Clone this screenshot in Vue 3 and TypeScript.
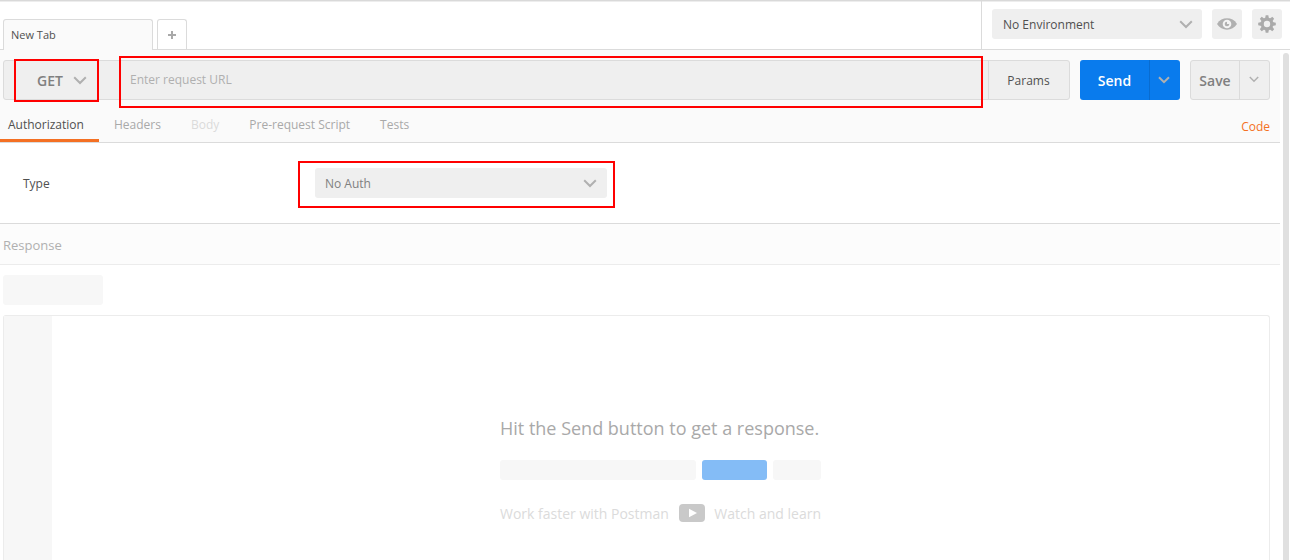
<script setup lang="ts">
interface RequestTab {
  label: string
  state?: 'active' | 'disabled'
}

const requestTabs: RequestTab[] = [
  { label: 'Authorization', state: 'active' },
  { label: 'Headers' },
  { label: 'Body', state: 'disabled' },
  { label: 'Pre-request Script' },
  { label: 'Tests' },
]

const gearTeeth: number[] = [0, 45, 90, 135, 180, 225, 270, 315]
</script>

<template>
  <div class="app">
    <header class="topbar">
      <div class="tabstrip">
        <div class="tab">New Tab</div>
        <button class="add-tab" aria-label="Add tab">
          <svg width="8" height="8" viewBox="0 0 8 8"><path d="M4 0v8M0 4h8" stroke="#a9a9a9" stroke-width="2" /></svg>
        </button>
      </div>
      <div class="environment">
        <div class="select env-select">
          <span>No Environment</span>
          <svg class="chevron" width="14" height="9" viewBox="0 0 14 9"><path d="M1.200 1.200 7 7l5.800-5.800" /></svg>
        </div>
        <button class="icon-button" aria-label="Quick look">
          <svg width="20" height="12" viewBox="0 0 20 12">
            <path d="M0 6C2.500 2 6 .3 10 .3S17.500 2 20 6c-2.500 4-6 5.700-10 5.700S2.500 10 0 6Z" fill="#b0b0b0" />
            <circle cx="10" cy="6" r="4.300" fill="#f3f3f3" />
            <circle cx="10" cy="6" r="2.300" fill="#b0b0b0" />
            <path d="M10 3.200V6h2.600V3.200Z" fill="#f3f3f3" />
          </svg>
        </button>
        <button class="icon-button" aria-label="Settings">
          <svg width="18" height="18" viewBox="-9 -9 18 18">
            <circle r="4.800" fill="none" stroke="#aaa" stroke-width="3.200" />
            <path v-for="angle in gearTeeth" :key="angle" d="M-1.900-5.500-1.300-8.800h2.600l.6 3.300Z" fill="#aaa" :transform="`rotate(${angle})`" />
          </svg>
        </button>
      </div>
    </header>

    <div class="body">
      <main class="content">
        <section class="builder">
          <div class="request-line">
            <div class="request-group">
              <div class="method">
                <span>GET</span>
                <svg class="chevron" width="14" height="9" viewBox="0 0 14 9"><path d="M1.200 1.200 7 7l5.800-5.800" /></svg>
                <i class="mark mark-method"></i>
              </div>
              <div class="url">
                <span>Enter request URL</span>
                <i class="mark mark-url"></i>
              </div>
              <div class="params">Params</div>
            </div>
            <div class="split send">
              <span>Send</span>
              <div class="split-arrow"><svg class="chevron" width="12" height="8" viewBox="0 0 12 8"><path d="M1 1.200 6 6.200l5-5" /></svg></div>
            </div>
            <div class="split save">
              <span>Save</span>
              <div class="split-arrow"><svg class="chevron" width="10" height="7" viewBox="0 0 10 7"><path d="M.8 1 5 5.200 9.200 1" /></svg></div>
            </div>
          </div>
          <nav class="request-tabs">
            <span v-for="tab in requestTabs" :key="tab.label" class="request-tab" :class="tab.state">{{ tab.label }}</span>
            <span class="code">Code</span>
          </nav>
        </section>

        <section class="auth">
          <span class="auth-label">Type</span>
          <div class="select auth-select">
            <span>No Auth</span>
            <svg class="chevron" width="14" height="9" viewBox="0 0 14 9"><path d="M1.200 1.200 7 7l5.800-5.800" /></svg>
            <i class="mark mark-auth"></i>
          </div>
        </section>

        <h2 class="response-title">Response</h2>
        <section class="response">
          <div class="response-chip"></div>
          <div class="viewer">
            <div class="gutter"></div>
            <div class="empty">
              <p class="hint">Hit the Send button to get a response.</p>
              <div class="skeleton"><i class="sk-url"></i><i class="sk-send"></i><i class="sk-save"></i></div>
              <div class="learn">
                <span class="learn-left">Work faster with Postman</span>
                <svg width="26" height="18" viewBox="0 0 26 18"><rect width="26" height="18" rx="4" fill="#c9c9c9" /><path d="M10 4.800v8.400L18 9Z" fill="#fff" /></svg>
                <span class="learn-right">Watch and learn</span>
              </div>
            </div>
          </div>
        </section>
      </main>
      <div class="scrollbar"><div class="thumb"></div></div>
    </div>
  </div>
</template>

<style>
body {
  margin: 0;
  overflow: hidden;
  background: #fff;
}
</style>

<style scoped>
.app,
.app * {
  box-sizing: border-box;
}
.app {
  width: 1290px;
  height: 560px;
  overflow: hidden;
  display: flex;
  flex-direction: column;
  font: 12px/18px "Open Sans", sans-serif;
  color: #505050;
  white-space: nowrap;
}
button {
  padding: 0;
  border: 0;
  display: flex;
  align-items: center;
  justify-content: center;
}
svg {
  display: block;
  flex: none;
}
.chevron {
  fill: none;
  stroke: #b0b0b0;
  stroke-width: 2;
}
.topbar {
  height: 50px;
  flex: none;
  display: flex;
  border-top: 1px solid #d9d9d9;
  border-bottom: 1px solid #dbdbdb;
  box-shadow: inset 0 1px #ededed;
}
.tabstrip {
  width: 981px;
  padding: 18px 0 0 3px;
  display: flex;
  gap: 4px;
}
.tab {
  width: 150px;
  height: 31px;
  padding: 6px 7px 0;
  border: 1px solid #dbdbdb;
  border-bottom: 0;
  border-radius: 3px 3px 0 0;
  background: #fafafa;
  font-size: 11px;
}
.add-tab {
  width: 30px;
  height: 30px;
  border: 1px solid #dbdbdb;
  border-bottom: 0;
  border-radius: 3px 3px 0 0;
  background: #fff;
}
.environment {
  flex: 1;
  padding: 8px 0 0 10px;
  display: flex;
  gap: 10px;
  border-left: 1px solid #dbdbdb;
}
.select {
  height: 30px;
  padding: 0 9px 0 11px;
  display: flex;
  align-items: center;
  justify-content: space-between;
  border-radius: 3px;
  background: #efefef;
}
.select > span {
  padding-top: 2px;
}
.env-select {
  width: 210px;
}
.icon-button {
  width: 30px;
  height: 30px;
  border-radius: 3px;
  background: #efefef;
}
.body {
  flex: 1;
  min-height: 0;
  display: flex;
}
.content {
  width: 1280px;
  display: flex;
  flex-direction: column;
}
.builder {
  height: 93px;
  flex: none;
  padding-top: 10px;
  background: #fafafa;
  border-bottom: 1px solid #dbdbdb;
}
.request-line {
  height: 40px;
  padding: 0 10px 0 3px;
  display: flex;
  gap: 10px;
}
.request-group {
  width: 1067px;
  display: flex;
  border: 1px solid #dbdbdb;
  border-radius: 3px;
  background: #efefef;
}
.method {
  position: relative;
  width: 115px;
  padding: 2px 0 0 33px;
  display: flex;
  align-items: center;
  gap: 10px;
  color: #808080;
  font-size: 14px;
  font-weight: 600;
}
.method .chevron {
  margin-top: -2px;
}
.url {
  position: relative;
  flex: 1;
  padding: 10px 0 0 11px;
  color: #b0b0b0;
}
.params {
  width: 81px;
  flex: none;
  padding-right: 1px;
  border-left: 1px solid #dbdbdb;
  line-height: 40px;
  text-align: center;
}
.mark {
  position: absolute;
  border: 2px solid #f00;
}
.mark-method {
  left: 10px;
  top: -2px;
  width: 85px;
  height: 43px;
}
.mark-url {
  left: 0;
  top: -5px;
  width: 864px;
  height: 52px;
}
.mark-auth {
  left: -17px;
  top: -7px;
  width: 317px;
  height: 47px;
}
.split {
  display: flex;
  border-radius: 3px;
  font-size: 14px;
  font-weight: 600;
  line-height: 41px;
  text-align: center;
}
.split > span {
  flex: 1;
}
.split-arrow {
  display: flex;
  align-items: center;
  justify-content: center;
}
.send {
  width: 100px;
  background: #097bed;
  color: #fff;
}
.send .split-arrow {
  width: 31px;
  padding: 0 2px 1px 0;
  border-left: 1px solid #086cd1;
}
.save {
  width: 80px;
  border: 1px solid #dbdbdb;
  background: #efefef;
  color: #808080;
  line-height: 39px;
}
.save .split-arrow {
  width: 30px;
  padding: 0 2px 2px 0;
  border-left: 1px solid #dbdbdb;
}
.save .chevron {
  stroke-width: 1.5;
}
.request-tabs {
  height: 42px;
  padding: 0 10px 0 0;
  display: flex;
}
.request-tab {
  padding: 16px 15px 0;
  color: #a9a9a9;
}
.request-tab.active {
  width: 99px;
  padding-left: 8px;
  border-bottom: 3px solid #f47023;
  color: #505050;
}
.request-tab.disabled {
  color: #dbdbdb;
}
.code {
  margin-left: auto;
  padding-top: 18px;
  color: #f47023;
}
.auth {
  height: 81px;
  flex: none;
  padding: 0 0 0 23px;
  display: flex;
  align-items: center;
  border-bottom: 1px solid #dbdbdb;
}
.auth-label {
  width: 292px;
  padding-top: 2px;
}
.auth-select {
  position: relative;
  width: 292px;
  padding: 0 10px;
  color: #808080;
}
.response-title {
  height: 41px;
  flex: none;
  margin: 0;
  padding-left: 3px;
  border-bottom: 1px solid #ececec;
  background: #fcfcfc;
  color: #b0b0b0;
  font-size: 13px;
  font-weight: 400;
  line-height: 42px;
}
.response {
  flex: 1;
  min-height: 0;
  padding: 10px 10px 0 3px;
  display: flex;
  flex-direction: column;
  gap: 10px;
}
.response-chip {
  width: 100px;
  height: 30px;
  flex: none;
  border-radius: 3px;
  background: #f7f7f7;
}
.viewer {
  flex: 1;
  display: flex;
  border: 1px solid #ececec;
  border-bottom: 0;
  border-radius: 3px 3px 0 0;
}
.gutter {
  width: 48px;
  background: #f7f7f7;
}
.empty {
  width: 321px;
  margin-left: 448px;
  padding-top: 99px;
}
.hint {
  margin: 0;
  color: #a9a9a9;
  font-size: 18px;
  line-height: 26px;
}
.skeleton {
  height: 20px;
  margin-top: 19px;
  display: flex;
  gap: 6px;
}
.skeleton i {
  border-radius: 3px;
  background: #f7f7f7;
}
.skeleton .sk-url {
  width: 196px;
}
.skeleton .sk-send {
  width: 65px;
  background: #84bcf6;
}
.skeleton .sk-save {
  width: 48px;
}
.learn {
  margin-top: 24px;
  display: flex;
  justify-content: space-between;
  color: #dbdbdb;
  font-size: 14px;
  line-height: 20px;
}
.scrollbar {
  width: 10px;
  padding: 3px 1px 0 3px;
}
.thumb {
  width: 6px;
  height: 520px;
  border-radius: 3px;
  background: #e0e0e0;
}
</style>
